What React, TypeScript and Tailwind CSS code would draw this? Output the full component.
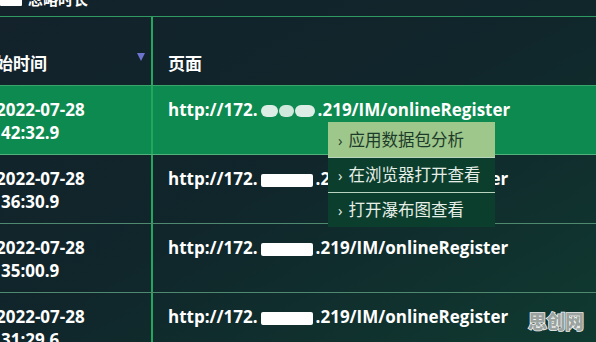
import React from "react";

type Row = {
  date: string;
  time: string;
  active?: boolean;
  soft?: boolean;
};

const rows: Row[] = [
  { date: "2022-07-28", time: "42:32.9", active: true, soft: true },
  { date: "2022-07-28", time: "36:30.9" },
  { date: "2022-07-28", time: "35:00.9" },
  { date: "2022-07-28", time: "31:29.6" },
];

const menu = ["应用数据包分析", "在浏览器打开查看", "打开瀑布图查看"];

function Redacted({ soft }: { soft?: boolean }) {
  // censored part of the ip address
  if (soft) {
    return (
      <span className="inline-flex items-center gap-[1px] align-middle mx-[3px]">
        <span className="inline-block w-[17px] h-[12px] rounded-full bg-white/85" />
        <span className="inline-block w-[15px] h-[12px] rounded-full bg-white/80" />
        <span className="inline-block w-[20px] h-[12px] rounded-full bg-white/85" />
      </span>
    );
  }
  return <span className="inline-block align-middle w-[52px] h-[13px] mx-[3px] rounded-[2px] bg-white" />;
}

export default function App() {
  return (
    <div
      className="relative w-[596px] h-[342px] overflow-hidden text-white bg-gradient-to-br from-[#13222b] via-[#10262b] to-[#0f3a30]"
      style={{ fontFamily: '"Open Sans", "Noto Sans CJK SC", sans-serif' }}
    >
      {/* top toolbar, mostly scrolled out */}
      <div className="h-[16px] flex items-start gap-[6px] overflow-hidden">
        <div className="w-[22px] h-[6px] bg-white rounded-b-[1px]" />
        <span className="-mt-[9px] text-[15px] font-bold leading-[16px] text-white">忽略时长</span>
      </div>
      <div className="h-[1px] bg-[#2f9a62]" />

      {/* header */}
      <div className="grid grid-cols-[151px_2px_1fr] h-[69px] border-b-[1px] border-[#3aa56a]">
        <div className="relative flex items-end pb-[10px] overflow-hidden">
          <span className="-ml-[21px] text-[17px] font-bold leading-[23px] whitespace-nowrap">开始时间</span>
          <span className="absolute left-[137px] top-[36px] w-0 h-0 border-x-[4px] border-x-transparent border-t-[8px] border-t-[#6c74cf]" />
        </div>
        <div className="bg-[#22a85c]" />
        <div className="flex items-end pb-[10px] pl-[15px]">
          <span className="text-[17px] font-bold leading-[23px]">页面</span>
        </div>
      </div>

      {/* rows */}
      {rows.map((r, i) => (
        <div
          key={i}
          className={`grid grid-cols-[151px_2px_1fr] h-[69px] border-b-[1px] ${
            r.active ? "bg-[#0c8a4f] border-[#52b07a]" : "border-[#4f8a70]"
          }`}
        >
          <div className="pt-[12px] overflow-hidden text-[17px] font-bold leading-[23px]">
            <div className="-ml-[4px] whitespace-nowrap">{r.date}</div>
            <div className="ml-[1px] whitespace-nowrap">{r.time}</div>
          </div>
          <div className="bg-[#22a85c]" />
          <div className="pt-[12px] pl-[15px] text-[17px] font-bold leading-[23px] whitespace-nowrap">
            http://172.
            <Redacted soft={r.soft} />
            .219/IM/onlineRegister
          </div>
        </div>
      ))}

      {/* context menu */}
      <div className="absolute left-[328px] top-[122px] w-[167px] flex flex-col text-[16.5px] leading-[20px]">
        {menu.map((m, i) => (
          <div
            key={m}
            className={`h-[35px] flex items-center gap-[6px] pl-[10px] whitespace-nowrap ${
              i === 0 ? "bg-[#9dc78b] text-[#1d3b2a]" : "bg-[#0b3e2c] text-[#e6efe8] border-t-[1px] border-[#b8d4bf]"
            }`}
          >
            <span className="text-[15px]">›</span>
            <span>{m}</span>
          </div>
        ))}
      </div>

      {/* watermark */}
      <div className="absolute left-[528px] top-[308px] text-[19px] font-black leading-[28px] tracking-[-0.5px] text-[#9aa3a0] [-webkit-text-stroke:1.5px_#f4f4f4] [paint-order:stroke_fill]">
        思创网
      </div>
    </div>
  );
}
